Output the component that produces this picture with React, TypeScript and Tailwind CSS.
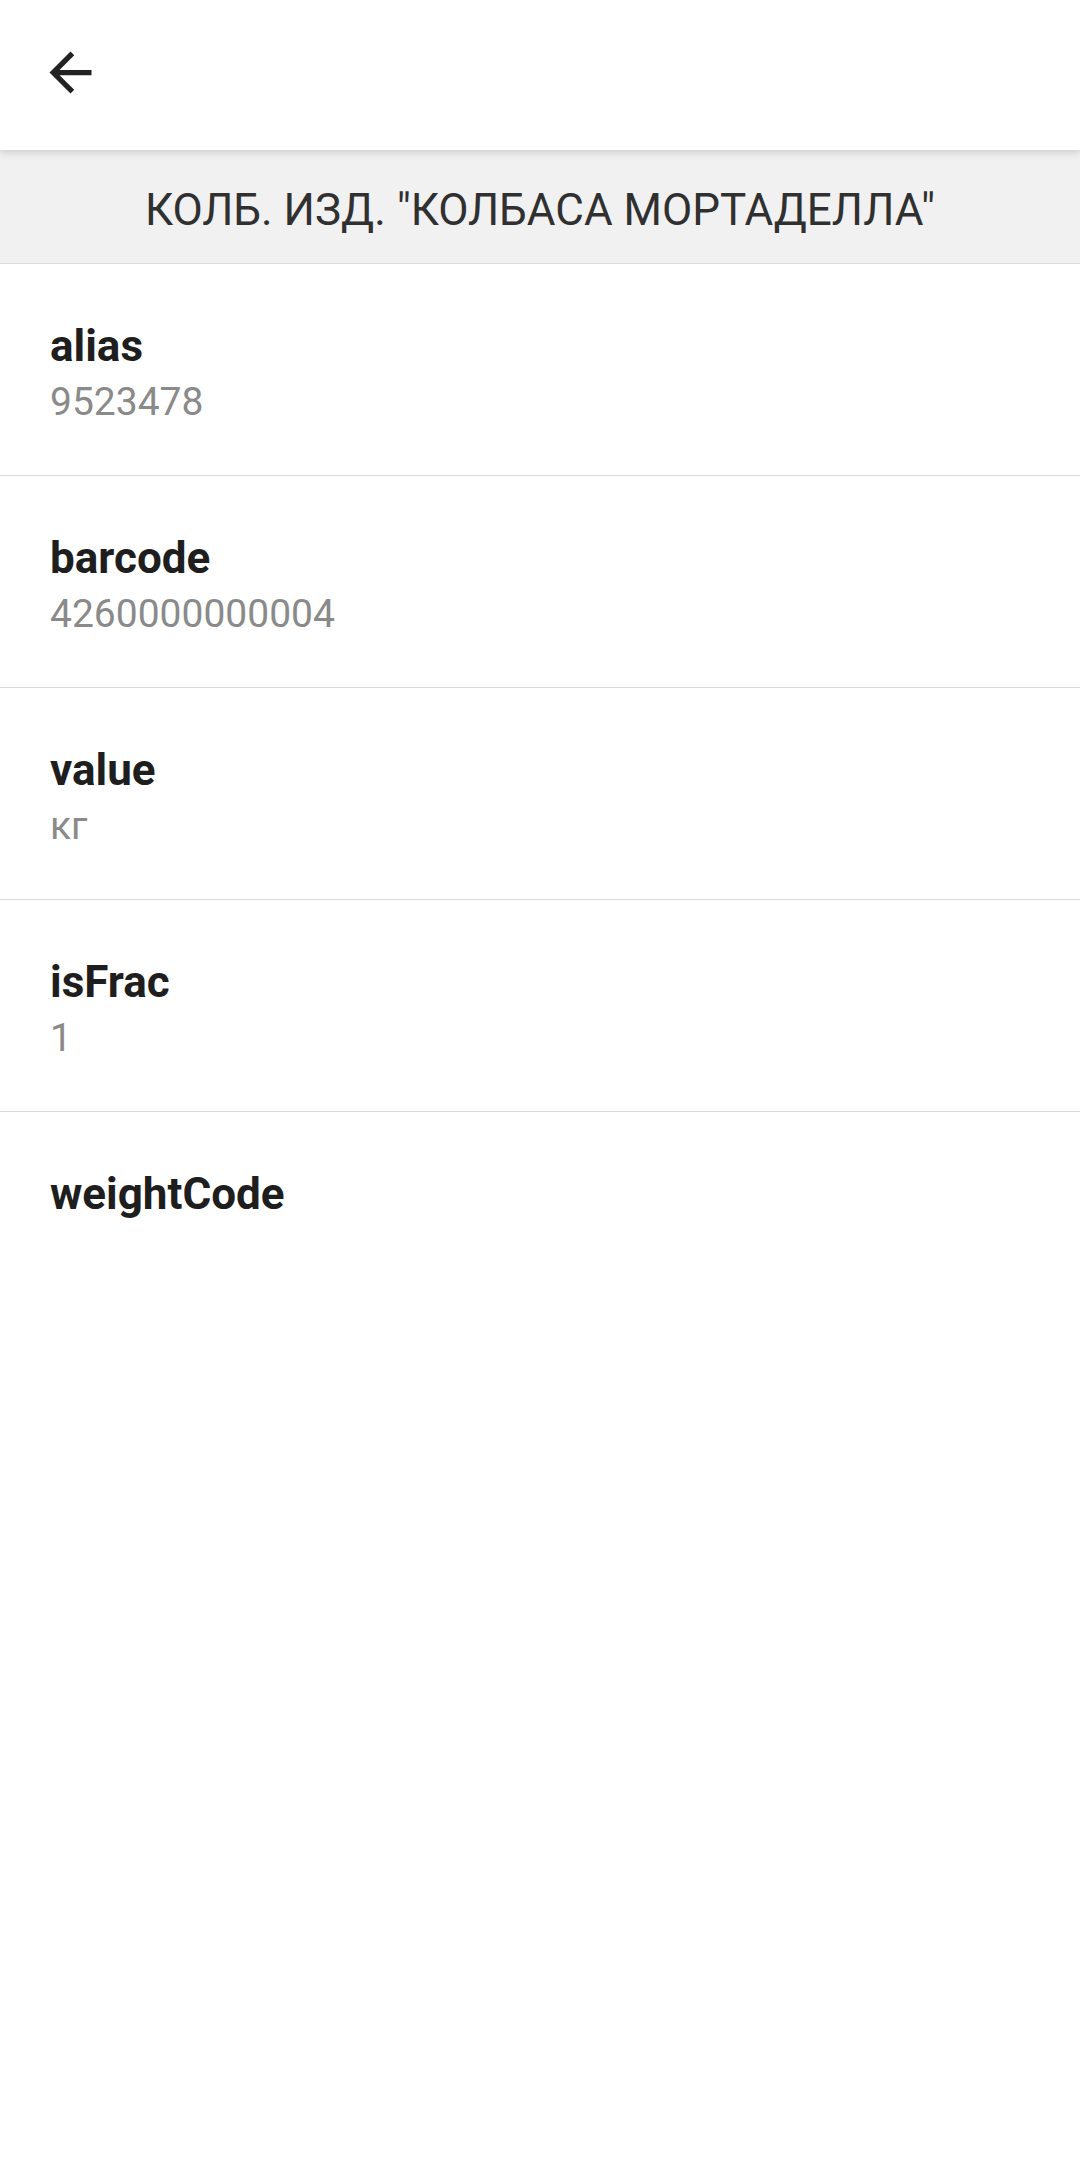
const fields = [
  { label: "alias", value: "9523478" },
  { label: "barcode", value: "4260000000004" },
  { label: "value", value: "кг" },
  { label: "isFrac", value: "1" },
  { label: "weightCode", value: "" },
];

const App = () => {
  return (
    <div className="min-h-[2157px] w-[1080px] bg-white font-['Roboto','Noto_Sans',sans-serif]">
      <header className="relative z-10 h-[150px] bg-white pt-[41px] pl-[39px] shadow-[0_3px_8px_rgba(0,0,0,0.14)]">
        <button className="block h-[63px] w-[63px]" aria-label="Назад">
          <svg viewBox="0 0 24 24" className="h-[63px] w-[63px]" fill="#222222">
            <path d="M20 11H7.83l5.59-5.59L12 4l-8 8 8 8 1.41-1.41L7.83 13H20v-2z" />
          </svg>
        </button>
      </header>

      <div className="border-b border-[#dadada] bg-[#f1f1f1] pt-[33px] pb-[26px] text-center text-[44px] leading-[54px] text-[#303030]">
        КОЛБ. ИЗД. "КОЛБАСА МОРТАДЕЛЛА"
      </div>

      <ul>
        {fields.map((f, i) => (
          <li
            key={f.label}
            className={
              i < fields.length - 1
                ? "h-[212px] border-b border-[#dadada] px-[50px] pt-[55px]"
                : "h-[212px] px-[50px] pt-[55px]"
            }
          >
            <p className="text-[44px] font-bold leading-[54px] text-[#1e1e1e]">{f.label}</p>
            {f.value && <p className="text-[39px] leading-[58px] text-[#8a8a8a]">{f.value}</p>}
          </li>
        ))}
      </ul>
    </div>
  );
};

export default App;
